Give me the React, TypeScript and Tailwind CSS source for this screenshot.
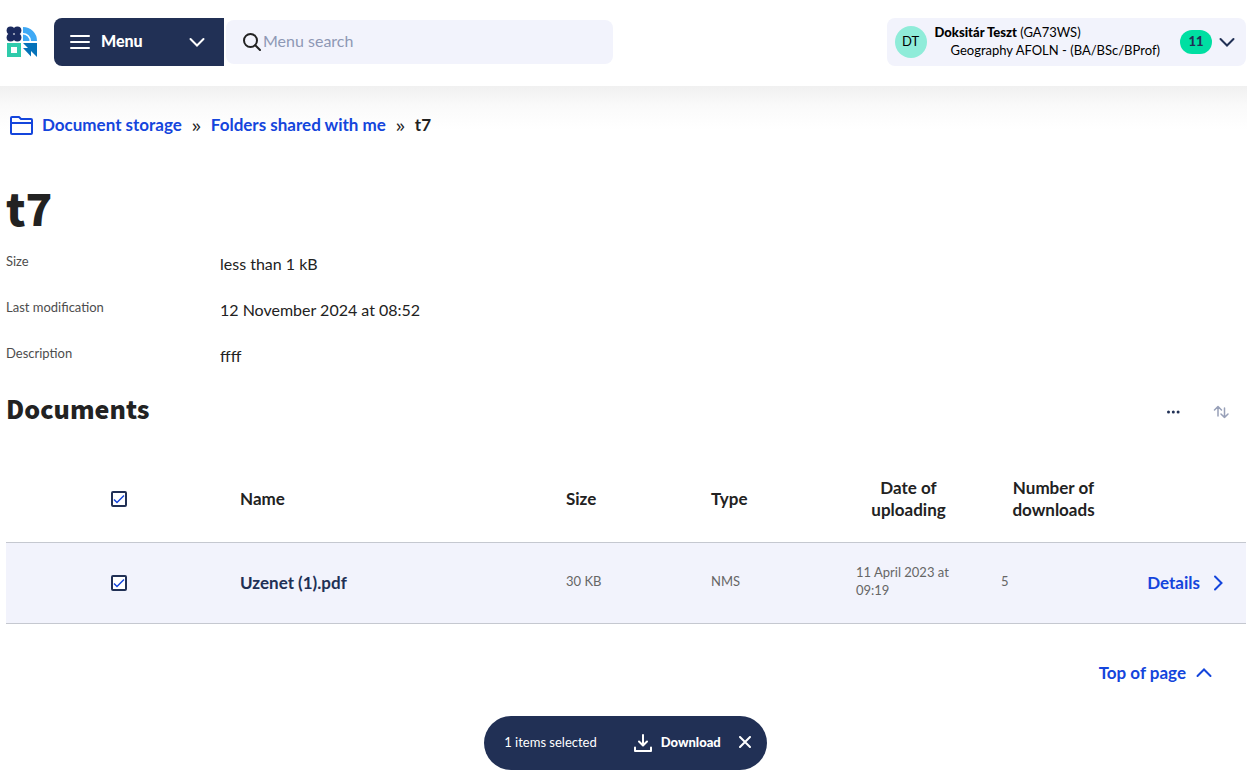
import { useState } from "react";

const details = [
  { label: "Size", value: "less than 1 kB" },
  { label: "Last modification", value: "12 November 2024 at 08:52" },
  { label: "Description", value: "ffff" },
];

const documents = [
  { name: "Uzenet (1).pdf", size: "30 KB", type: "NMS", date: "11 April 2023 at 09:19", downloads: 5 },
];

function Logo() {
  return (
    <svg className="h-8 w-8 shrink-0" viewBox="0 0 32 32" aria-label="Neptun">
      <g fill="#1b2a5e">
        <circle cx="4.600" cy="4.600" r="4" />
        <circle cx="11.400" cy="4.600" r="4" />
        <circle cx="4.600" cy="11.400" r="4" />
        <circle cx="11.400" cy="11.400" r="4" />
      </g>
      <path d="M17 1a14 14 0 0 1 14 14h-6a8 8 0 0 0-8-8z" fill="#3fa9f5" />
      <path d="M17 8.500a6.500 6.500 0 0 1 6.500 6.500H17z" fill="#3fa9f5" />
      <path d="M1 17h14v14H1zM5 21v6h6v-6z" fill="#2fcbab" fillRule="evenodd" />
      <path d="M17 17h14v14l-6-6v5.500L17 22h5z" fill="#0572b9" />
    </svg>
  );
}

function Chevron({ className }: { className: string }) {
  return (
    <svg className={className} viewBox="0 0 16 16" fill="none" stroke="currentColor" strokeWidth="2" strokeLinecap="round" aria-hidden="true">
      <path d="m1.500 5 6.500 6.500L14.500 5" />
    </svg>
  );
}

function Header() {
  return (
    <header className="relative flex h-[86px] items-start justify-between gap-4 bg-white pt-[18px] pr-px pl-1.5">
      <div className="flex h-12 min-w-0 flex-1 items-center">
        <Logo />
        <button className="ml-4 flex h-12 w-[170px] shrink-0 items-center rounded-l-lg bg-[#213055] px-4 text-white">
          <svg className="h-5 w-5" viewBox="0 0 20 20" stroke="currentColor" strokeWidth="2" strokeLinecap="round" aria-hidden="true">
            <path d="M1 4h18M1 10h18M1 16h18" />
          </svg>
          <span className="ml-[11px] pb-0.5 text-base font-black">Menu</span>
          <Chevron className="mr-[3px] ml-auto h-4 w-4" />
        </button>
        <label className="ml-0.5 flex h-11 max-w-[387px] flex-1 items-center rounded-lg bg-[#f2f3fc] pl-[17px]">
          <svg className="h-[18px] w-[18px] shrink-0" viewBox="0 0 18 18" fill="none" stroke="#222" strokeWidth="2" strokeLinecap="round" aria-hidden="true">
            <circle cx="7.500" cy="7.500" r="6.500" />
            <path d="m12.300 12.300 4.700 4.700" />
          </svg>
          <input
            type="text"
            aria-label="Menu search"
            placeholder="Menu search"
            className="ml-0.5 min-w-0 flex-1 bg-transparent pb-0.5 text-base text-[#222] outline-none placeholder:text-[#8e98b5]"
          />
        </label>
      </div>
      <button className="flex h-12 items-center rounded-lg bg-[#f2f3fc] pr-[11px] pl-2 text-left text-black">
        <span className="flex h-8 w-8 items-center justify-center rounded-full bg-[#8fecd9] text-[13px]">DT</span>
        <span className="ml-2 pb-0.5 text-[13px] leading-[18px]">
          <span className="block">
            <b className="font-black">Doksitár Teszt</b> (GA73WS)
          </span>
          <span className="block pl-4">Geography AFOLN - (BA/BSc/BProf)</span>
        </span>
        <span className="ml-5 flex h-6 w-8 items-center justify-center rounded-full bg-[#00dfa2] text-[13px] font-black text-[#213055]">11</span>
        <Chevron className="ml-[7px] h-4 w-4 text-[#213055]" />
      </button>
    </header>
  );
}

function Breadcrumb() {
  return (
    <nav aria-label="Breadcrumb" className="flex items-center pt-[27px] pl-1 text-[17px] leading-6 font-bold text-[#1445dc]">
      <svg className="mr-2 h-6 w-6" viewBox="0 0 24 24" fill="none" stroke="currentColor" strokeWidth="2" strokeLinejoin="round" aria-hidden="true">
        <path d="M2 21h19a1 1 0 0 0 1-1V7a1 1 0 0 0-1-1H11L9 4H2a1 1 0 0 0-1 1v15a1 1 0 0 0 1 1zM1 10h21" />
      </svg>
      <a href="#storage">Document storage</a>
      <span className="mx-2.5 font-['Open_Sans',sans-serif] text-lg leading-6 font-medium text-[#222]">»</span>
      <a href="#shared">Folders shared with me</a>
      <span className="mx-2.5 font-['Open_Sans',sans-serif] text-lg leading-6 font-medium text-[#222]">»</span>
      <span className="text-[#222]">t7</span>
    </nav>
  );
}

function Checkbox({ label, checked, onChange }: { label: string; checked: boolean; onChange: () => void }) {
  return (
    <span className="grid h-4 w-4">
      <input
        type="checkbox"
        aria-label={label}
        checked={checked}
        onChange={onChange}
        className="col-start-1 row-start-1 h-4 w-4 appearance-none rounded-[2px] border-2 border-[#213055] bg-white"
      />
      {checked && (
        <svg className="pointer-events-none col-start-1 row-start-1 h-4 w-4" viewBox="0 0 16 16" fill="none" stroke="#1445dc" strokeWidth="1.500" aria-hidden="true">
          <path d="m3 8.500 3 3 7-7" />
        </svg>
      )}
    </span>
  );
}

export default function App() {
  const [selected, setSelected] = useState(true);
  const toggle = () => setSelected(!selected);

  return (
    <div id="top" className="min-h-screen bg-white font-['Lato',sans-serif] text-[#222]">
      <Header />
      <main className="bg-linear-to-b from-[#f0f0f0] via-[#fafafa] via-[20px] to-white to-[44px] pr-px pb-20 pl-1.5">
        <Breadcrumb />
        <h1 className="mt-9 font-['Noto_Sans_CJK_SC',sans-serif] text-[44px] leading-[68px] font-black">t7</h1>
        <dl className="mt-2.5">
          {details.map((item) => (
            <div key={item.label} className="flex h-[46px] items-start">
              <dt className="w-[214px] shrink-0 text-[13px] leading-5 text-[#4d4d4d]">{item.label}</dt>
              <dd className="pt-px text-base leading-6">{item.value}</dd>
            </div>
          ))}
        </dl>

        <div className="flex items-center justify-between">
          <h2 className="font-['Noto_Sans_CJK_SC',sans-serif] text-[25px] leading-[38px] font-black">Documents</h2>
          <div className="flex items-center gap-8 pt-2 pr-[17px]">
            <button aria-label="More actions" className="text-[#213055]">
              <svg className="h-4 w-4" viewBox="0 0 16 16" fill="currentColor">
                <circle cx="3.500" cy="8" r="1.500" />
                <circle cx="8.300" cy="8" r="1.500" />
                <circle cx="13.100" cy="8" r="1.500" />
              </svg>
            </button>
            <button aria-label="Sort" className="text-[#98a0b8]">
              <svg className="h-4 w-4" viewBox="0 0 16 16" fill="none" stroke="currentColor" strokeWidth="1.500" strokeLinecap="round" strokeLinejoin="round">
                <path d="M5 12V2.500M1.500 6 5 2.500 8.500 6M11.500 4v9.500M8 10l3.500 3.500L15 10" />
              </svg>
            </button>
          </div>
        </div>

        <table className="mt-[29px] w-full table-fixed text-left">
          <colgroup>
            <col className="w-[214px]" />
            <col />
            <col className="w-[145px]" />
            <col className="w-[145px]" />
            <col className="w-[145px]" />
            <col className="w-[145px]" />
            <col className="w-[120px]" />
          </colgroup>
          <thead>
            <tr className="h-[86px] border-b border-[#c5c8d0] text-[17px] leading-[22px]">
              <th className="pl-[105px]"><Checkbox label="Select all" checked={selected} onChange={toggle} /></th>
              <th className="px-5">Name</th>
              <th className="px-5">Size</th>
              <th className="px-5">Type</th>
              <th className="px-5 text-center">Date of uploading</th>
              <th className="px-5 text-center">Number of downloads</th>
              <th aria-label="Details" />
            </tr>
          </thead>
          <tbody>
            {documents.map((doc) => (
              <tr key={doc.name} className="h-[81px] border-b border-[#c5c8d0] bg-[#f2f3fc] text-[13px] leading-[18px] text-[#666]">
                <td className="pl-[105px]"><Checkbox label={doc.name} checked={selected} onChange={toggle} /></td>
                <td className="px-5 text-[17px] font-bold text-[#213055]">{doc.name}</td>
                <td className="px-5 pb-1">{doc.size}</td>
                <td className="px-5 pb-1">{doc.type}</td>
                <td className="px-5 pb-1">{doc.date}</td>
                <td className="px-5 pb-1">{doc.downloads}</td>
                <td className="pr-5">
                  <a href="#details" className="flex items-center justify-end gap-2.5 text-[17px] font-bold text-[#1445dc]">
                    Details
                    <Chevron className="h-4 w-4 -rotate-90" />
                  </a>
                </td>
              </tr>
            ))}
          </tbody>
        </table>

        <div className="mt-[37px] flex justify-end pr-[34px]">
          <a href="#top" className="flex items-center gap-2.5 text-[17px] leading-6 font-bold text-[#1445dc]">
            Top of page
            <Chevron className="h-4 w-4 rotate-180" />
          </a>
        </div>
      </main>

      {selected && (
        <div className="fixed inset-x-0 bottom-0 flex justify-center pl-1">
          <div className="flex h-[54px] items-center rounded-full bg-[#213055] pr-4 pl-5 text-[13px] text-white">
            <span>1 items selected</span>
            <button className="ml-[37px] flex items-center font-black">
              <svg className="mr-[9px] h-[18px] w-[18px]" viewBox="0 0 18 18" fill="none" stroke="currentColor" strokeWidth="2" strokeLinecap="round" strokeLinejoin="round" aria-hidden="true">
                <path d="M9 1v10M5 7.500 9 11.500l4-4M1 13.500V17h16v-3.500" />
              </svg>
              Download
            </button>
            <button aria-label="Clear selection" className="ml-[18px] pb-0.5" onClick={() => setSelected(false)}>
              <svg className="h-3 w-3" viewBox="0 0 12 12" stroke="currentColor" strokeWidth="2" strokeLinecap="round">
                <path d="m1 1 10 10M11 1 1 11" />
              </svg>
            </button>
          </div>
        </div>
      )}
    </div>
  );
}
